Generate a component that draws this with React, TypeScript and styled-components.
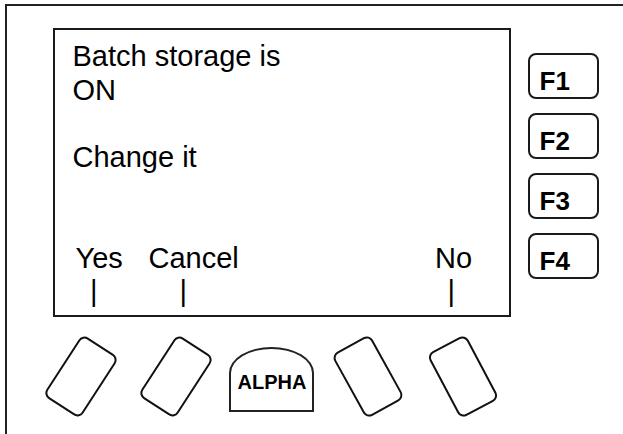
import React from "react";
import styled, { createGlobalStyle } from "styled-components";

const Global = createGlobalStyle`
  html, body {
    margin: 0;
    padding: 0;
    background: #ffffff;
    overflow: hidden;
    width: 623px;
    height: 434px;
  }
  * { box-sizing: border-box; }
`;

const Frame = styled.div`
  margin: 4px 0 0 5px;
  width: 618px;
  height: 430px;
  border-left: 2px solid #222;
  border-top: 2px solid #222;
  padding-top: 22px;
  font-family: "Liberation Sans", Arial, sans-serif;
  color: #000;
`;

const TopRow = styled.div`
  display: flex;
  align-items: flex-start;
  margin-left: 46px;
`;

const Screen = styled.div`
  width: 458px;
  height: 289px;
  border: 2px solid #1a1a1a;
  padding: 10px 0 0 17.5px;
  font-size: 29px;
  line-height: 33.6px;
`;

const Line = styled.div`
  height: 33.6px;
  white-space: pre;
`;

const LabelRow = styled.div<{ $indent: number }>`
  display: flex;
  height: 33.6px;
  white-space: pre;
  padding-left: ${(p) => p.$indent}px;
`;

const Label = styled.span<{ $w?: number }>`
  display: block;
  flex: none;
  width: ${(p) => (p.$w ? `${p.$w}px` : "auto")};
`;

const FColumn = styled.div`
  display: flex;
  flex-direction: column;
  gap: 14px;
  margin-left: 17px;
  padding-top: 25px;
`;

const FKey = styled.div`
  width: 71px;
  height: 46px;
  border: 2px solid #1a1a1a;
  border-radius: 8px;
  padding: 12.5px 0 0 9.5px;
  font-weight: 700;
  font-size: 26px;
  line-height: 26px;
`;

const KeyRow = styled.div`
  display: flex;
  margin: 18px 0 0 26px;
`;

const KeySlot = styled.div`
  width: 95.6px;
  height: 82px;
  flex: none;
  display: flex;
  align-items: center;
  justify-content: center;
`;

const SoftKey = styled.div<{ $angle: number }>`
  width: 44px;
  height: 73px;
  border: 2px solid #111;
  border-radius: 7px;
  transform: rotate(${(p) => p.$angle}deg);
`;

const AlphaKey = styled.div`
  width: 85px;
  height: 65px;
  margin-top: 6px;
  border: 2px solid #222;
  border-radius: 42.5px 42.5px 0 0 / 26px 26px 0 0;
  display: flex;
  justify-content: center;
  padding-top: 23px;
  font-weight: 700;
  font-size: 20px;
  line-height: 20px;
`;

export default function App() {
  return (
    <>
      <Global />
      <Frame>
        <TopRow>
          <Screen>
            <Line>Batch storage is</Line>
            <Line>ON</Line>
            <Line> </Line>
            <Line>Change it</Line>
            <Line> </Line>
            <Line> </Line>
            <LabelRow $indent={3}>
              <Label $w={73}>Yes</Label>
              <Label $w={286.5}>Cancel</Label>
              <Label>No</Label>
            </LabelRow>
            <LabelRow $indent={17.5}>
              <Label $w={89.5}>|</Label>
              <Label $w={268}>|</Label>
              <Label>|</Label>
            </LabelRow>
          </Screen>
          <FColumn>
            <FKey>F1</FKey>
            <FKey>F2</FKey>
            <FKey>F3</FKey>
            <FKey>F4</FKey>
          </FColumn>
        </TopRow>
        <KeyRow>
          <KeySlot>
            <SoftKey $angle={33} />
          </KeySlot>
          <KeySlot>
            <SoftKey $angle={33} />
          </KeySlot>
          <KeySlot>
            <AlphaKey>ALPHA</AlphaKey>
          </KeySlot>
          <KeySlot>
            <SoftKey $angle={-29} />
          </KeySlot>
          <KeySlot>
            <SoftKey $angle={-28} />
          </KeySlot>
        </KeyRow>
      </Frame>
    </>
  );
}
